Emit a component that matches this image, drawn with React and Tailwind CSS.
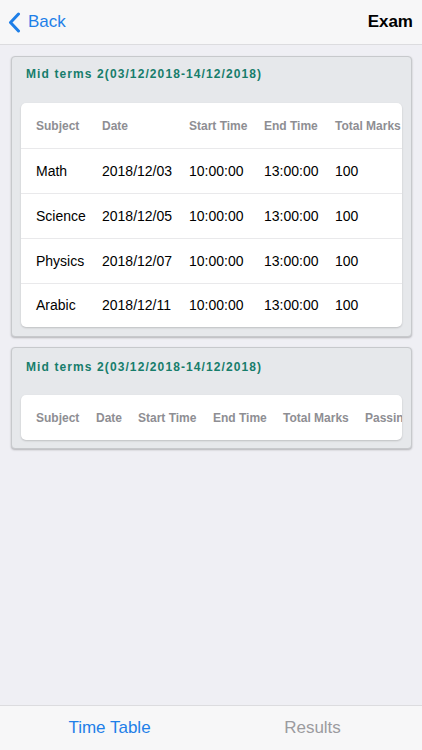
import React from "react";

const t1 = {
  widths: [66, 87, 75, 71, 90],
  heads: ["Subject", "Date", "Start Time", "End Time", "Total Marks"],
  rows: [
    ["Math", "2018/12/03", "10:00:00", "13:00:00", "100"],
    ["Science", "2018/12/05", "10:00:00", "13:00:00", "100"],
    ["Physics", "2018/12/07", "10:00:00", "13:00:00", "100"],
    ["Arabic", "2018/12/11", "10:00:00", "13:00:00", "100"],
  ],
};
const t2 = {
  widths: [60, 42, 75, 70, 82, 90],
  heads: ["Subject", "Date", "Start Time", "End Time", "Total Marks", "Passing Marks"],
  rows: [],
};

function Table({ t, mb }) {
  return (
    <div className={`mx-[9px] ${mb} overflow-hidden rounded-[5px] bg-white shadow-[0_1px_2px_rgba(0,0,0,0.18)]`}>
      <div className="flex h-[45px] items-center whitespace-nowrap pl-[15px] text-[12px] font-bold text-[#8e8e93]">
        {t.heads.map((h, i) => (
          <div key={i} className="shrink-0" style={{ width: t.widths[i] }}>
            {h}
          </div>
        ))}
      </div>
      {t.rows.map((r, ri) => (
        <div
          key={ri}
          className="flex h-[45px] items-center whitespace-nowrap border-t border-[#e9e9eb] pl-[15px] text-[14px] text-black last:h-[44px]"
        >
          {r.map((c, i) => (
            <div key={i} className="shrink-0" style={{ width: t.widths[i] }}>
              {c}
            </div>
          ))}
        </div>
      ))}
    </div>
  );
}

function Card({ t, titleCls, mb }) {
  return (
    <div className="rounded-[4px] border border-[#c7c9cc] bg-[#e6e8eb] shadow-[0_1px_2px_rgba(0,0,0,0.25)]">
      <div
        className={`${titleCls} pl-[14px] text-[12px] font-bold leading-[14px] tracking-[1.1px] text-[#177d6b]`}
      >
        Mid terms 2(03/12/2018-14/12/2018)
      </div>
      <Table t={t} mb={mb} />
    </div>
  );
}

export default function App() {
  return (
    <div
      className="flex h-[750px] w-[422px] flex-col overflow-hidden bg-[#efeff4]"
      style={{ fontFamily: '"Liberation Sans", Arial, sans-serif' }}
    >
      <div className="flex h-[45px] shrink-0 items-center justify-between border-b border-[#dcdcdf] bg-[#f7f7f8] pl-[8px] pr-[9px]">
        <div className="flex items-center text-[17px] text-[#1e7fe8]">
          <svg width="13" height="21" viewBox="0 0 13 21" className="mr-[7px]">
            <path d="M10.5 2 L2.5 10.5 L10.5 19" fill="none" stroke="#1e7fe8" strokeWidth="3" strokeLinecap="round" strokeLinejoin="round" />
          </svg>
          Back
        </div>
        <div className="text-[17px] font-bold text-black">Exam</div>
      </div>
      <div className="flex flex-1 flex-col gap-[10px] pl-[11px] pr-[10px] pt-[11px]">
        <Card t={t1} titleCls="pt-[10px] h-[46px]" mb="mb-[9px]" />
        <Card t={t2} titleCls="pt-[12px] h-[47px]" mb="mb-[8px]" />
      </div>
      <div className="grid h-[45px] shrink-0 grid-cols-2 items-center border-t border-[#dcdcdf] bg-[#f7f7f8] text-[17px]">
        <div className="pl-[8px] text-center text-[#1e7fe8]">Time Table</div>
        <div className="pr-[8px] text-center text-[#9b9b9f]">Results</div>
      </div>
    </div>
  );
}
